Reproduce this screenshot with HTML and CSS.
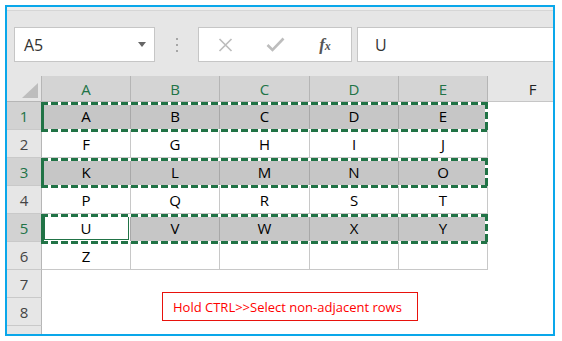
FILE: index.html
```html
<!DOCTYPE html>
<html lang="en">
<head>
    <meta charset="UTF-8">
    <meta name="viewport" content="width=device-width, initial-scale=1.0">
    <title>Select non-adjacent rows</title>
    <link rel="stylesheet" href="styles.css">
</head>
<body>
    <div class="frame">
        <div class="toolbar">
            <div class="namebox"><span>A5</span><span class="caret"></span></div>
            <div class="grip"><i></i><i></i><i></i></div>
            <div class="fbuttons">
                <div class="slot">
                    <svg width="15" height="14" viewBox="0 0 15 14"><path d="M1.5 1 L13.5 13 M13.5 1 L1.5 13" stroke="#bdbdbd" stroke-width="1.7" fill="none"/></svg>
                </div>
                <div class="slot">
                    <svg width="19" height="15" viewBox="0 0 19 15"><path d="M1.5 8 L6.5 13 L17.5 1.5" stroke="#bdbdbd" stroke-width="2.6" fill="none"/></svg>
                </div>
                <div class="slot"><span class="fx">f<small>x</small></span></div>
            </div>
            <div class="fbar">U</div>
        </div>

        <div class="sheet">
            <div class="row head">
                <div class="corner"><span class="tri"></span></div>
                <div class="colhead">A</div>
                <div class="colhead">B</div>
                <div class="colhead wide">C</div>
                <div class="colhead">D</div>
                <div class="colhead">E</div>
                <div class="colhead rest">F</div>
            </div>
            <div class="row marked">
                <div class="rowhead sel">1</div>
                <div class="cells">
                    <div class="cell">A</div><div class="cell">B</div><div class="cell">C</div><div class="cell">D</div><div class="cell">E</div>
                </div>
            </div>
            <div class="row">
                <div class="rowhead">2</div>
                <div class="cells">
                    <div class="cell">F</div><div class="cell">G</div><div class="cell">H</div><div class="cell">I</div><div class="cell">J</div>
                </div>
            </div>
            <div class="row marked">
                <div class="rowhead sel">3</div>
                <div class="cells">
                    <div class="cell">K</div><div class="cell">L</div><div class="cell">M</div><div class="cell">N</div><div class="cell">O</div>
                </div>
            </div>
            <div class="row">
                <div class="rowhead">4</div>
                <div class="cells">
                    <div class="cell">P</div><div class="cell">Q</div><div class="cell">R</div><div class="cell">S</div><div class="cell">T</div>
                </div>
            </div>
            <div class="row marked">
                <div class="rowhead sel">5</div>
                <div class="cells">
                    <div class="cell active">U</div><div class="cell">V</div><div class="cell">W</div><div class="cell">X</div><div class="cell">Y</div>
                </div>
            </div>
            <div class="row">
                <div class="rowhead">6</div>
                <div class="cells">
                    <div class="cell">Z</div><div class="cell"></div><div class="cell"></div><div class="cell"></div><div class="cell"></div>
                </div>
            </div>
            <div class="row">
                <div class="rowhead">7</div>
            </div>
            <div class="row">
                <div class="rowhead">8</div>
            </div>
            <div class="row">
                <div class="rowhead"></div>
            </div>
        </div>

        <div class="note">Hold CTRL&gt;&gt;Select non-adjacent rows</div>
    </div>
</body>
</html>
```

FILE: styles.css
```css
body {
    margin: 0;
    background: #fff;
    font-family: "Open Sans", Arial, sans-serif;
}
.frame {
    position: relative;
    width: 550px;
    height: 331px;
    margin: 5px;
    border: 2px solid #0aa7ea;
    box-sizing: border-box;
    overflow: hidden;
    background: #fff;
}

/* formula bar */
.toolbar {
    display: flex;
    align-items: flex-start;
    height: 69px;
    box-sizing: border-box;
    padding: 20px 0 0 7px;
    background: linear-gradient(#efefef 0 3px, #d6d6d6 3px 4px, #e6e6e6 4px);
}
.namebox {
    display: flex;
    align-items: center;
    justify-content: space-between;
    flex: none;
    width: 141px;
    height: 35px;
    box-sizing: border-box;
    border: 1px solid #c6c6c6;
    background: #fff;
    padding: 0 8px 0 9px;
    font-size: 16px;
    color: #333;
}
.caret {
    width: 0;
    height: 0;
    border-left: 4px solid transparent;
    border-right: 4px solid transparent;
    border-top: 5px solid #666;
}
.grip {
    display: flex;
    flex-direction: column;
    gap: 4px;
    margin: 11px 0 0 21px;
}
.grip i {
    display: block;
    width: 2px;
    height: 2px;
    background: #a6a6a6;
}
.fbuttons {
    display: flex;
    flex: none;
    width: 154px;
    height: 35px;
    box-sizing: border-box;
    border: 1px solid #c6c6c6;
    background: #fff;
    margin-left: 20px;
    padding-left: 1px;
}
.slot {
    width: 50px;
    display: flex;
    align-items: center;
    justify-content: center;
}
.fx {
    font-family: "Liberation Serif", serif;
    font-style: italic;
    font-weight: bold;
    font-size: 17px;
    color: #555;
}
.fx small {
    font-size: 12px;
}
.fbar {
    flex: 1;
    height: 35px;
    box-sizing: border-box;
    border: 1px solid #c6c6c6;
    background: #fff;
    margin: 0 -2px 0 5px;
    padding-left: 17px;
    display: flex;
    align-items: center;
    font-size: 16px;
    color: #333;
}

/* grid */
.row {
    display: flex;
    height: 28px;
}
.row.head {
    height: 26px;
}
.corner {
    flex: none;
    width: 35px;
    box-sizing: border-box;
    border-right: 1px solid #b6b6b6;
    border-bottom: 1px solid #b6b6b6;
    background: #e6e6e6;
    display: flex;
    align-items: flex-end;
    justify-content: flex-end;
    padding: 0 3px 3px 0;
}
.tri {
    width: 0;
    height: 0;
    border-left: 16px solid transparent;
    border-bottom: 15px solid #bdbdbd;
}
.colhead {
    flex: none;
    width: 89px;
    box-sizing: border-box;
    border-right: 1px solid #b5b5b5;
    border-bottom: 1px solid #b5b5b5;
    background: #d4d4d4;
    color: #217346;
    font-size: 15px;
    display: flex;
    align-items: center;
    justify-content: center;
}
.colhead.wide {
    width: 90px;
}
.colhead.rest {
    background: #e6e6e6;
    color: #222;
    border-right: none;
    border-bottom-color: #c6c6c6;
}
.rowhead {
    flex: none;
    width: 35px;
    box-sizing: border-box;
    border-right: 1px solid #b6b6b6;
    border-bottom: 1px solid #c9c9c9;
    background: #e6e6e6;
    display: flex;
    align-items: center;
    justify-content: center;
    font-size: 15px;
    color: #444;
}
.rowhead.sel {
    background: #d2d2d2;
    color: #217346;
}
.cells {
    display: flex;
    position: relative;
}
.cell {
    flex: none;
    width: 89px;
    box-sizing: border-box;
    border-right: 1px solid #c8c8c8;
    border-bottom: 1px solid #c8c8c8;
    display: flex;
    align-items: center;
    justify-content: center;
    font-size: 15px;
    color: #000;
}
.cell:nth-child(3) {
    width: 90px;
}
.marked .cell {
    background: #c6c6c6;
    border-right-color: #a8a8a8;
}
.marked .cell.active {
    background: #fff;
    outline: 1px solid #217346;
    outline-offset: -3px;
}
/* copy marquee round each selected row */
.marked .cells::after {
    content: "";
    position: absolute;
    top: 0;
    bottom: -2px;
    left: -1px;
    right: 0;
    pointer-events: none;
    background:
        repeating-linear-gradient(90deg, #217346 0 7px, #fff 7px 10px) top left / 100% 3px no-repeat,
        repeating-linear-gradient(90deg, #217346 0 7px, #fff 7px 10px) bottom left / 100% 3px no-repeat,
        repeating-linear-gradient(180deg, #217346 0 7px, #fff 7px 10px) top right / 3px 100% no-repeat,
        linear-gradient(#217346, #217346) top left / 3px 100% no-repeat;
}

.note {
    position: absolute;
    left: 155px;
    top: 285px;
    width: 256px;
    height: 29px;
    box-sizing: border-box;
    border: 1px solid #e8120c;
    background: #fff;
    color: #f00;
    font-size: 13px;
    padding-left: 10px;
    display: flex;
    align-items: center;
}
```
